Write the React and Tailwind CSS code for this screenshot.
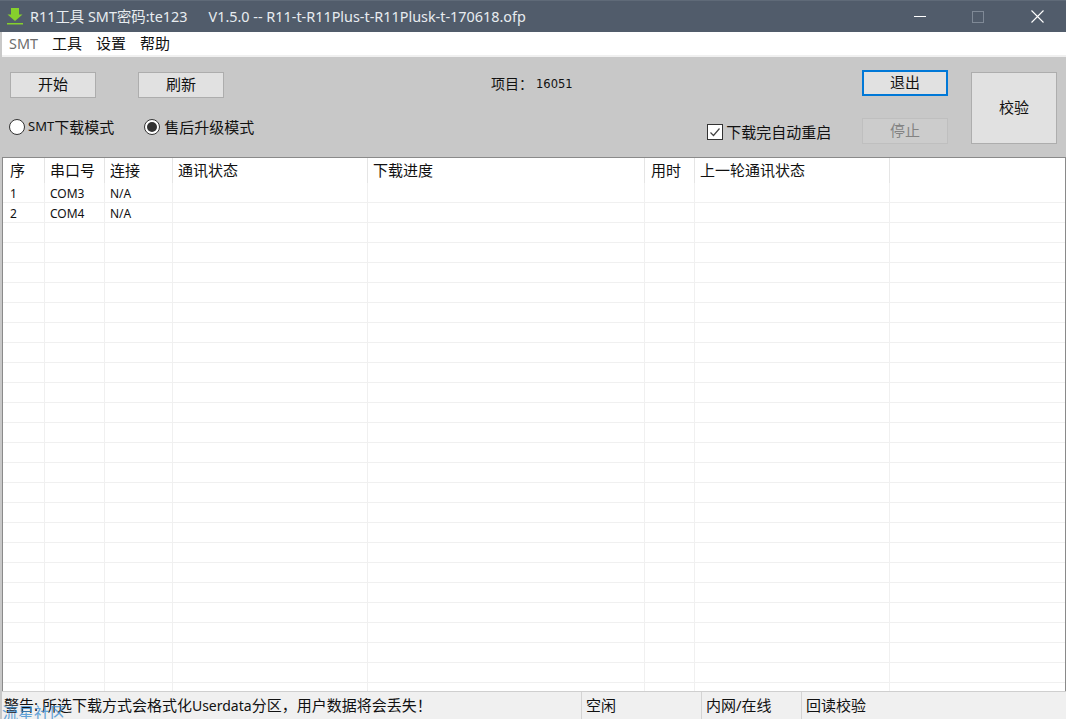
import React from "react";

const cols = [42, 60, 68, 195, 277, 50, 195];
const headers = ["序", "串口号", "连接", "通讯状态", "下载进度", "用时", "上一轮通讯状态"];
const headerPad = ["pl-[7px]", "pl-[5px]", "pl-[5px]", "pl-[5px]", "pl-[5px]", "pl-[6px]", "pl-[5px]"];
const rows = [
  ["1", "COM3", "N/A"],
  ["2", "COM4", "N/A"],
];
const font = { fontFamily: '"Noto Sans","Noto Sans CJK SC",sans-serif' };

function Btn({ children, className = "" }) {
  return (
    <div className={`flex items-center justify-center w-[86px] h-[26px] pb-[2px] bg-[#e1e1e1] border border-[#adadad] text-[15px] leading-none text-[#111] ${className}`}>
      {children}
    </div>
  );
}

function Radio({ checked }) {
  return (
    <span className="flex items-center justify-center w-[16px] h-[16px] rounded-full bg-white border border-[#333]">
      {checked && <span className="block w-[10px] h-[10px] rounded-full bg-[#333]" />}
    </span>
  );
}

function Row({ cells = [], header = false }) {
  return (
    <div className={`flex shrink-0 ${header ? "h-[25px]" : "h-[20px] border-b border-[#f0f0f0]"}`}>
      {cols.map((w, i) => (
        <div
          key={i}
          style={{ width: w }}
          className={`shrink-0 border-r ${headerPad[i]} ${header ? "border-[#e5e5e5] text-[15px] pt-[2px] leading-[20px]" : "border-[#f0f0f0] text-[12px] pt-[2px] leading-[18px]"} text-[#111] whitespace-nowrap`}
        >
          {cells[i] || ""}
        </div>
      ))}
      <div className="flex-1" />
    </div>
  );
}

export default function App() {
  return (
    <div className="relative w-[1066px] h-[719px] overflow-hidden flex flex-col bg-[#c8c8c8]" style={font}>
      <div className="h-[32px] shrink-0 bg-[#515c6b] border-t border-[#5f6a78] flex items-center text-[14.4px] text-[#e8ecf0] pl-[7px]">
        <svg width="16" height="17" viewBox="0 0 16 17" className="shrink-0">
          <path d="M4 0h8v6.5h3.5L8 13 0.5 6.5H4z" fill="#86d02c" />
          <rect x="0" y="15" width="16" height="1.5" fill="#86d02c" />
        </svg>
        <span className="ml-[7px] whitespace-pre">R11工具 SMT密码:te123</span>
        <span className="ml-[21px] whitespace-pre">V1.5.0 -- R11-t-R11Plus-t-R11Plusk-t-170618.ofp</span>
        <div className="ml-auto flex items-center">
          <span className="block w-[12px] h-[1px] bg-white mr-[46px]" />
          <span className="block w-[12px] h-[12px] border border-[#7f8996] mr-[47px]" />
          <svg width="13" height="13" viewBox="0 0 13 13" className="mr-[22px]">
            <path d="M0.5 0.5l12 12M12.5 0.5l-12 12" stroke="#fff" strokeWidth="1.1" />
          </svg>
        </div>
      </div>

      <div className="h-[23px] shrink-0 ml-[2px] bg-white flex items-center text-[15px] text-[#111] pl-[7px]">
        <span className="text-[#6d6d6d] text-[14.4px]">SMT</span>
        <span className="ml-[14px]">工具</span>
        <span className="ml-[14px]">设置</span>
        <span className="ml-[14px]">帮助</span>
      </div>
      <div className="h-[2px] shrink-0 ml-[2px] bg-[#f0f0f0]" />

      <div className="h-[100px] shrink-0 flex pl-[2px]">
        <div className="w-[860px] shrink-0 pl-[7px] pt-[15px]">
          <div className="flex items-start pl-[1px]">
            <Btn>开始</Btn>
            <Btn className="ml-[42px]">刷新</Btn>
            <div className="ml-[267px] mt-[1px] text-[14px] leading-[20px] text-[#111] whitespace-nowrap flex items-center">
              项目：<span className="text-[11.5px] ml-[3px] mt-[1px] font-['DejaVu_Sans']">16051</span>
            </div>
          </div>
          <div className="flex items-center mt-[17px] h-[24px] text-[15px] text-[#111]">
            <Radio />
            <span className="ml-[3px] text-[13px]">SMT</span>
            <span>下载模式</span>
            <span className="ml-[30px]"><Radio checked /></span>
            <span className="ml-[4px]">售后升级模式</span>
            <div className="ml-[453px] mt-[10px] flex items-center whitespace-nowrap">
              <span className="flex items-center justify-center w-[16px] h-[16px] bg-white border border-[#333]">
                <svg width="12" height="12" viewBox="0 0 12 12">
                  <path d="M1.5 6.5l3 3 6-7" fill="none" stroke="#444" strokeWidth="1.2" />
                </svg>
              </span>
              <span className="ml-[3px]">下载完自动重启</span>
            </div>
          </div>
        </div>
        <div className="w-[86px] shrink-0 pt-[13px]">
          <div className="flex items-center justify-center h-[26px] pb-[2px] bg-[#e1e1e1] border-2 border-[#0078d7] text-[15px] leading-none text-[#111]">退出</div>
          <div className="flex items-center justify-center mt-[22px] h-[26px] pb-[2px] bg-[#cccccc] border border-[#bfbfbf] text-[15px] leading-none text-[#838383]">停止</div>
        </div>
        <div className="w-[86px] shrink-0 ml-[23px] mt-[15px] h-[72px] flex items-center justify-center pb-[2px] bg-[#e1e1e1] border border-[#adadad] text-[15px] leading-none text-[#111]">校验</div>
      </div>

      <div className="flex-1 min-h-0 ml-[2px] bg-white border-t border-l border-r border-[#8a8a8a] flex flex-col overflow-hidden">
        <Row header cells={headers} />
        {rows.map((r, i) => (
          <Row key={i} cells={r} />
        ))}
        {Array.from({ length: 24 }).map((_, i) => (
          <Row key={i} />
        ))}
      </div>

      <div className="h-[28px] shrink-0 ml-[2px] bg-[#f0f0f0] border-t border-[#cfcfcf] flex text-[15px] leading-[27px] text-[#111]">
        <div className="w-[579px] shrink-0 pl-[2px] whitespace-nowrap">警告: 所选下载方式会格式化<span className="text-[14px]">Userdata</span>分区，用户数据将会丢失！</div>
        <div className="w-[120px] shrink-0 border-l border-[#d4d4d4] pl-[4px]">空闲</div>
        <div className="w-[100px] shrink-0 border-l border-[#d4d4d4] pl-[4px]">内网/在线</div>
        <div className="flex-1 border-l border-[#d4d4d4] pl-[4px]">回读校验</div>
      </div>

      <div className="absolute left-[2px] top-[703px] text-[16px] leading-[20px] text-[#3f8fd2] opacity-80 whitespace-nowrap">流星社区</div>
    </div>
  );
}
